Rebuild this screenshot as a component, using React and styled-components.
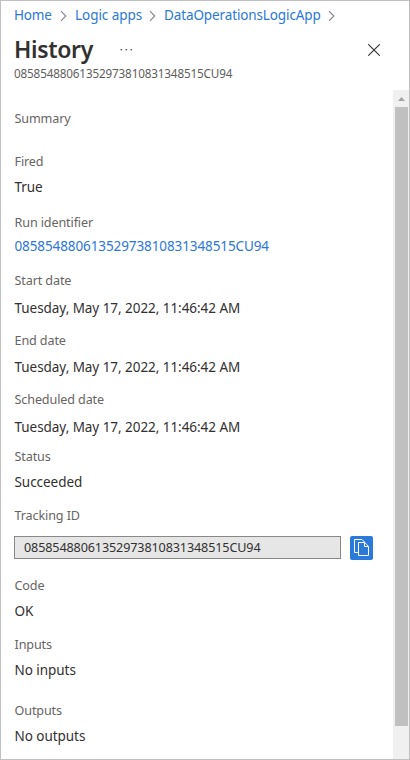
import React from "react";
import styled, { createGlobalStyle } from "styled-components";

const GlobalStyle = createGlobalStyle`
  * { box-sizing: border-box; }
  body { margin: 0; background: #fff; overflow: hidden; }
`;

const Panel = styled.main`
  display: flex;
  flex-direction: column;
  width: 410px;
  height: 760px;
  border: 1px solid #c0c0c0;
  background: #fff;
  color: #323130;
  font-family: "Noto Sans", "Open Sans", sans-serif;
  font-size: 13.5px;
  line-height: 20px;
  white-space: nowrap;
`;

const Header = styled.header`
  height: 89px;
  padding: 4px 0 0 13px;
`;

const Breadcrumb = styled.nav`
  display: flex;
  align-items: center;
  height: 20px;
`;

const Crumb = styled.a`
  color: #2b78d9;
  letter-spacing: ${(p) => p.$tracking}px;
  width: ${(p) => p.$width}px;
`;

const CrumbArrow = styled.svg`
  width: 7px;
  height: 12px;
  margin: 2px 8px 0 7px;
  flex: none;
`;

const TitleRow = styled.div`
  display: flex;
  align-items: center;
  height: 36px;
  margin-top: 6px;
`;

const Title = styled.h1`
  margin: 0;
  width: 106px;
  font-size: 23px;
  font-weight: 600;
  line-height: 36px;
  letter-spacing: -0.35px;
`;

const IconButton = styled.button`
  display: flex;
  padding: 0;
  border: 0;
  background: none;
  margin-top: 2px;
  margin-left: ${(p) => p.$left || 0}px;
`;

const Subtitle = styled.div`
  margin-top: -4px;
  color: #605e5c;
  font-size: 11.7px;
  letter-spacing: -0.15px;
`;

const Body = styled.div`
  display: flex;
  flex: 1;
  min-height: 0;
`;

const Fields = styled.section`
  flex: 1;
  padding: 18px 0 0 13px;
`;

const Field = styled.div`
  display: flex;
  flex-direction: column;
  gap: ${(p) => p.$gap}px;
  margin-top: ${(p) => p.$top}px;
`;

const Label = styled.div`
  height: 20px;
  color: #676563;
  font-size: 12.6px;
  line-height: 22px;
  letter-spacing: -0.12px;
  text-indent: 0.5px;
`;

const Value = styled.div`
  letter-spacing: -0.05px;
  text-indent: 0.5px;
`;

const ValueLink = styled.a`
  color: #2b78d9;
  letter-spacing: -0.1px;
  text-indent: 0.5px;
`;

const CopyRow = styled.div`
  display: flex;
  gap: 9px;
  height: 23px;
`;

const ReadOnlyBox = styled.div`
  width: 327px;
  height: 23px;
  padding-left: 9px;
  border: 1px solid #8a8886;
  background: #e6e6e6;
  font-size: 12.6px;
  line-height: 21px;
  letter-spacing: -0.12px;
`;

const CopyButton = styled.button`
  width: 23px;
  height: 24px;
  padding: 0;
  border: 0;
  border-radius: 2px;
  background: #2b79d9;
  svg { display: block; }
`;

const Scrollbar = styled.div`
  display: flex;
  flex-direction: column;
  width: 16px;
  padding: 0 1px 0 2px;
  background: #f0f0f0;
`;

const ScrollArrow = styled.svg`
  width: 13px;
  height: 17px;
  flex: none;
`;

const Thumb = styled.div`
  height: 619px;
  background: #c0c0c0;
`;

const Arrow = () => (
  <CrumbArrow viewBox="0 0 7 12">
    <path d="M1 1.2 5.8 6 1 10.8" fill="none" stroke="#85838a" strokeWidth="1.1" />
  </CrumbArrow>
);

const RUN_ID = "08585488061352973810831348515CU94";
const RUN_DATE = "Tuesday, May 17, 2022, 11:46:42 AM";

const beforeTracking = [
  { label: "Summary", top: 0, gap: 0 },
  { label: "Fired", value: "True", top: 23, gap: 6 },
  { label: "Run identifier", value: RUN_ID, link: true, top: 15, gap: 4 },
  { label: "Start date", value: RUN_DATE, top: 14, gap: 8 },
  { label: "End date", value: RUN_DATE, top: 12, gap: 7 },
  { label: "Scheduled date", value: RUN_DATE, top: 12, gap: 8 },
  { label: "Status", value: "Succeeded", top: 9, gap: 6 },
];

const afterTracking = [
  { label: "Code", value: "OK", top: 16, gap: 6 },
  { label: "Inputs", value: "No inputs", top: 13, gap: 6 },
  { label: "Outputs", value: "No outputs", top: 20, gap: 6 },
];

const renderField = ({ label, value, link, top, gap }) => (
  <Field key={label} $top={top} $gap={gap}>
    <Label>{label}</Label>
    {value && (link ? <ValueLink>{value}</ValueLink> : <Value>{value}</Value>)}
  </Field>
);

export default function App() {
  return (
    <Panel>
      <GlobalStyle />
      <Header>
        <Breadcrumb>
          <Crumb $width={39} $tracking={-0.2}>Home</Crumb>
          <Arrow />
          <Crumb $width={67} $tracking={-0.05}>Logic apps</Crumb>
          <Arrow />
          <Crumb $width={157} $tracking={-0.12}>DataOperationsLogicApp</Crumb>
          <Arrow />
        </Breadcrumb>
        <TitleRow>
          <Title>History</Title>
          <IconButton aria-label="More">
            <svg width="13" height="4" viewBox="0 0 13 4" fill="#605e5c">
              <rect x="0.5" y="1" width="1.6" height="1.4" />
              <rect x="5.5" y="1" width="1.6" height="1.4" />
              <rect x="10.5" y="1" width="1.6" height="1.4" />
            </svg>
          </IconButton>
          <IconButton $left={235} aria-label="Close">
            <svg width="12" height="12" viewBox="0 0 12 12">
              <path d="M.3.3l11.4 11.4M11.7.3.3 11.7" stroke="#323130" strokeWidth="1.1" />
            </svg>
          </IconButton>
        </TitleRow>
        <Subtitle>{RUN_ID}</Subtitle>
      </Header>
      <Body>
        <Fields>
          {beforeTracking.map(renderField)}
          <Field $top={13} $gap={11}>
            <Label>Tracking ID</Label>
            <CopyRow>
              <ReadOnlyBox>{RUN_ID}</ReadOnlyBox>
              <CopyButton aria-label="Copy">
                <svg width="23" height="24" viewBox="0 0 23 24" fill="none" stroke="#fff" strokeWidth="1">
                  <path d="M8.5 16.5h-4v-13h7.5l2.5 2.5" />
                  <path d="M8.5 6.5h6.2l3.8 3.8v9.2h-10zM14.5 6.5v4h4" />
                </svg>
              </CopyButton>
            </CopyRow>
          </Field>
          {afterTracking.map(renderField)}
        </Fields>
        <Scrollbar>
          <ScrollArrow viewBox="0 0 13 17">
            <path d="M3 11 6.5 7 10 11z" fill="#a3a3a3" />
          </ScrollArrow>
          <Thumb />
        </Scrollbar>
      </Body>
    </Panel>
  );
}
